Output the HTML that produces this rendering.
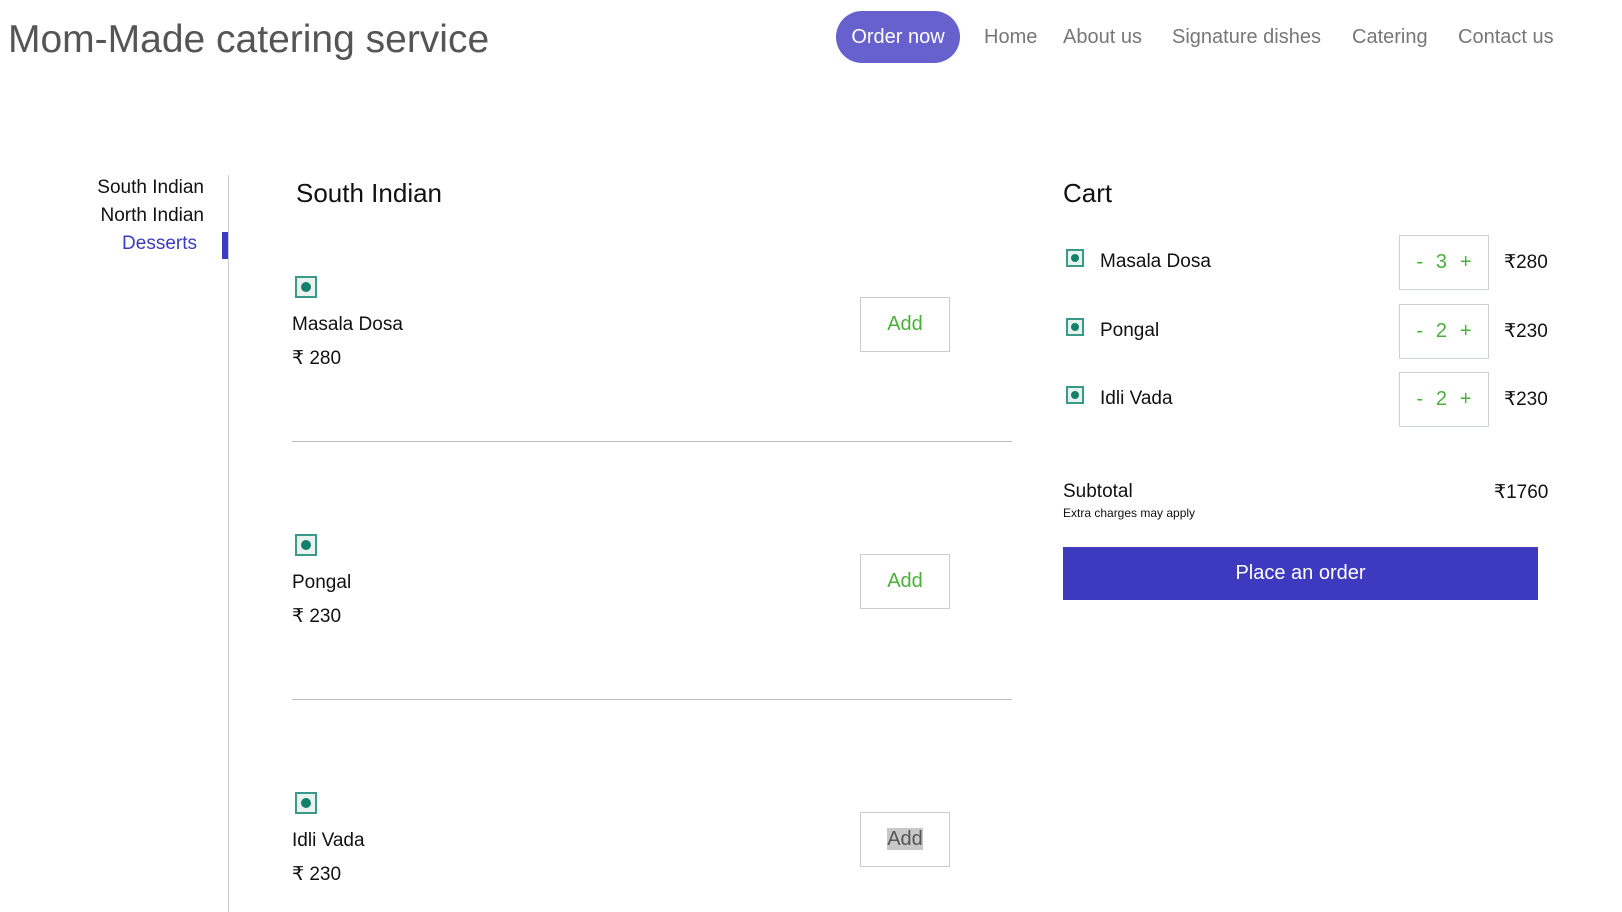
<!DOCTYPE html>
<html><head><meta charset="utf-8"><style>
*{margin:0;padding:0;box-sizing:border-box}
body{width:1622px;height:912px;overflow:hidden;background:#fff;font-family:"Comic Sans MS","Liberation Sans","DejaVu Sans",sans-serif;color:#111;position:relative}
.a{position:absolute;white-space:nowrap}
.title{left:8px;top:18px;font-size:39px;color:#555}
.pill{left:836px;top:11px;width:124px;height:52px;border-radius:26px;background:#6661cc;color:#fff;font-size:20px;line-height:52px;text-align:center}
.nav{top:26px;font-size:20px;color:#777}
.side{font-size:19px;right:1418px;text-align:right}
.veg{width:22px;height:22px;border:2px solid #3a9a8a;background:#e8f2ee}
.veg:after{content:"";position:absolute;left:4px;top:4px;width:10px;height:10px;border-radius:50%;background:#13806a}
.vs{width:18px;height:18px}
.vs:after{left:3px;top:3px;width:8px;height:8px}
.add{width:90px;height:55px;border:1px solid #ccc;color:#4caf3c;font-size:20px;line-height:53px;text-align:center}
.hr{left:292px;width:720px;height:1px;background:#bbb}
.qty{width:90px;height:55px;border:1px solid #c8d4cc;color:#4caf3c;font-size:20px;line-height:53px;display:flex;justify-content:space-around;padding:0 10px}
</style></head><body>
<div class="a title">Mom-Made catering service</div>
<div class="a pill">Order now</div>
<div class="a nav" style="left:984px">Home</div>
<div class="a nav" style="left:1063px">About us</div>
<div class="a nav" style="left:1172px">Signature dishes</div>
<div class="a nav" style="left:1352px">Catering</div>
<div class="a nav" style="left:1458px">Contact us</div>

<div class="a side" style="top:177px">South Indian</div>
<div class="a side" style="top:205px">North Indian</div>
<div class="a side" style="top:233px;color:#3c3cc0;right:1425px">Desserts</div>
<div class="a" style="left:222px;top:232px;width:6px;height:27px;background:#3c3cc0"></div>
<div class="a" style="left:228px;top:175px;width:1px;height:737px;background:#ccc"></div>

<div class="a" style="left:296px;top:178px;font-size:26px">South Indian</div>

<div class="a veg" style="left:295px;top:276px"></div>
<div class="a" style="left:292px;top:314px;font-size:19px">Masala Dosa</div>
<div class="a" style="left:292px;top:347px;font-size:19px">₹ 280</div>
<div class="a add" style="left:860px;top:297px">Add</div>
<div class="a hr" style="top:441px"></div>

<div class="a veg" style="left:295px;top:534px"></div>
<div class="a" style="left:292px;top:572px;font-size:19px">Pongal</div>
<div class="a" style="left:292px;top:605px;font-size:19px">₹ 230</div>
<div class="a add" style="left:860px;top:554px">Add</div>
<div class="a hr" style="top:699px"></div>

<div class="a veg" style="left:295px;top:792px"></div>
<div class="a" style="left:292px;top:830px;font-size:19px">Idli Vada</div>
<div class="a" style="left:292px;top:863px;font-size:19px">₹ 230</div>
<div class="a add" style="left:860px;top:812px"><span style="background:#c8c8c8;color:#555">Add</span></div>

<div class="a" style="left:1063px;top:178px;font-size:26px">Cart</div>

<div class="a veg vs" style="left:1066px;top:249px"></div>
<div class="a" style="left:1100px;top:251px;font-size:19px">Masala Dosa</div>
<div class="a qty" style="left:1399px;top:235px"><span>-</span><span>3</span><span>+</span></div>
<div class="a" style="left:1504px;top:251px;font-size:19px">₹280</div>

<div class="a veg vs" style="left:1066px;top:318px"></div>
<div class="a" style="left:1100px;top:320px;font-size:19px">Pongal</div>
<div class="a qty" style="left:1399px;top:304px"><span>-</span><span>2</span><span>+</span></div>
<div class="a" style="left:1504px;top:320px;font-size:19px">₹230</div>

<div class="a veg vs" style="left:1066px;top:386px"></div>
<div class="a" style="left:1100px;top:388px;font-size:19px">Idli Vada</div>
<div class="a qty" style="left:1399px;top:372px"><span>-</span><span>2</span><span>+</span></div>
<div class="a" style="left:1504px;top:388px;font-size:19px">₹230</div>

<div class="a" style="left:1063px;top:481px;font-size:19px">Subtotal</div>
<div class="a" style="left:1063px;top:506px;font-size:12px">Extra charges may apply</div>
<div class="a" style="left:1494px;top:481px;font-size:19px">₹1760</div>
<div class="a" style="left:1063px;top:547px;width:475px;height:53px;background:#3d3abf;color:#fff;font-size:20px;line-height:53px;text-align:center">Place an order</div>
</body></html>
